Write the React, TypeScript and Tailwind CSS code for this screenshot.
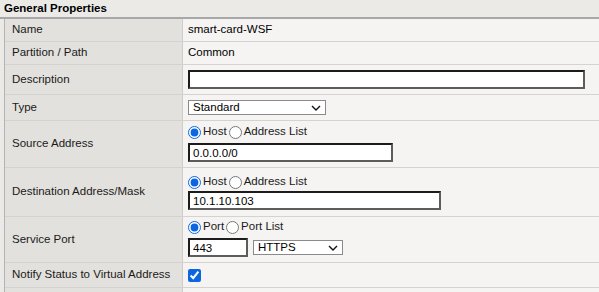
import React from "react";

const Chevron = () => (
  <svg width="10" height="6" viewBox="0 0 10 6" className="shrink-0">
    <polyline points="1,1 5,5 9,1" fill="none" stroke="#111" strokeWidth="1.4" />
  </svg>
);

const TextBox = ({ value, w }: { value: string; w: string }) => (
  <input
    type="text"
    readOnly
    value={value}
    className={`${w} h-[19px] bg-white border-2 border-t-[#1c1c1c] border-l-[#1c1c1c] border-r-[#5c5c5c] border-b-[#5c5c5c] pl-[3px] text-[11.5px] leading-[15px] text-black outline-none`}
  />
);

const Select = ({ value, w }: { value: string; w: string }) => (
  <div
    className={`${w} h-[15px] flex items-center justify-between bg-white border border-[#8a8a8a] pl-[4px] pr-[4px] text-[11.5px] leading-[13px] text-black`}
  >
    <span>{value}</span>
    <Chevron />
  </div>
);

const Radios = ({ a, b }: { a: string; b: string }) => (
  <div className="h-[16px] flex items-center">
    <input type="radio" checked readOnly className="m-0 w-[13px] h-[13px] accent-[#0b66e0]" />
    <span className="ml-[2px]">{a}</span>
    <input type="radio" readOnly className="m-0 ml-[2px] w-[13px] h-[13px]" />
    <span className="ml-[2px]">{b}</span>
  </div>
);

const Row = ({
  label,
  h,
  children,
  top,
}: {
  label: string;
  h: string;
  children?: React.ReactNode;
  top?: boolean;
}) => (
  <div className={`${h} flex border-b border-[#d5d3cf]`}>
    <div className="w-[177px] shrink-0 bg-[#e3e1dd] pl-[7px] flex items-center">{label}</div>
    <div
      className={`flex-1 bg-[#f5f4f2] border-l border-[#cfcdc9] pl-[5px] flex ${
        top ? "flex-col" : "items-center"
      }`}
    >
      {children}
    </div>
  </div>
);

export default function App() {
  return (
    <div className="w-[599px] h-[292px] overflow-hidden bg-[#ebeae7] font-['Liberation_Sans',Arial,sans-serif] text-[11.5px] text-[#1a1a1a]">
      <div className="h-[19px] pl-[4px] font-bold leading-[17px] text-black border-b-2 border-[#a8a8a8]">
        General Properties
      </div>
      <div className="ml-[4px] border-l border-[#b4b4b4]">
        <Row label="Name" h="h-[23px]">
          <span className="text-black">smart-card-WSF</span>
        </Row>
        <Row label="Partition / Path" h="h-[23px]">
          <span className="text-black">Common</span>
        </Row>
        <Row label="Description" h="h-[30px]">
          <TextBox value="" w="w-[397px]" />
        </Row>
        <Row label="Type" h="h-[26px]">
          <Select value="Standard" w="w-[138px]" />
        </Row>
        <Row label="Source Address" h="h-[47px]" top>
          <div className="pt-[3px]">
            <Radios a="Host" b="Address List" />
          </div>
          <div className="mt-[3px]">
            <TextBox value="0.0.0.0/0" w="w-[205px]" />
          </div>
        </Row>
        <Row label="Destination Address/Mask" h="h-[49px]" top>
          <div className="pt-[6px]">
            <Radios a="Host" b="Address List" />
          </div>
          <div className="mt-[1px]">
            <TextBox value="10.1.10.103" w="w-[253px]" />
          </div>
        </Row>
        <Row label="Service Port" h="h-[46px]" top>
          <div className="pt-[2px]">
            <Radios a="Port" b="Port List" />
          </div>
          <div className="mt-[3px] flex items-center gap-[5px]">
            <TextBox value="443" w="w-[60px]" />
            <Select value="HTTPS" w="w-[90px]" />
          </div>
        </Row>
        <Row label="Notify Status to Virtual Address" h="h-[25px]">
          <input type="checkbox" checked readOnly className="m-0 w-[13px] h-[13px] accent-[#0b66e0]" />
        </Row>
        <Row label="" h="h-[25px]" />
      </div>
    </div>
  );
}
